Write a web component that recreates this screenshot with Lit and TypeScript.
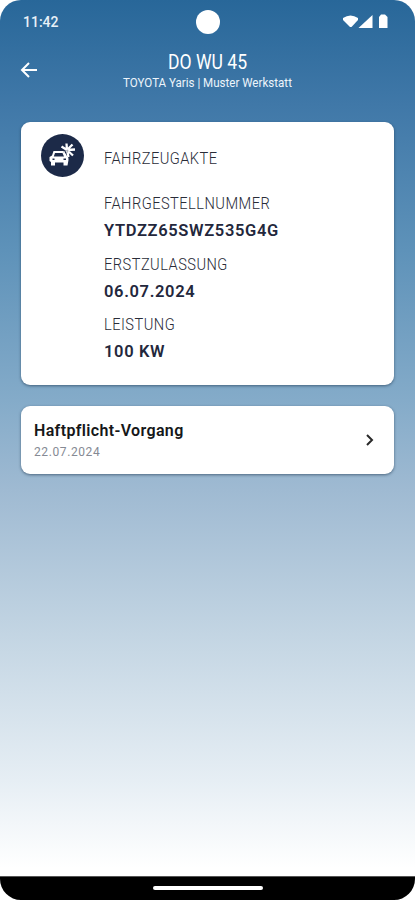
import { LitElement, html, css } from "lit";
import { customElement } from "lit/decorators.js";

const details = [
  { label: "FAHRGESTELLNUMMER", value: "YTDZZ65SWZ535G4G" },
  { label: "ERSTZULASSUNG", value: "06.07.2024" },
  { label: "LEISTUNG", value: "100 KW" },
];

@customElement("app-root")
export class AppRoot extends LitElement {
  static styles = css`
    :host { display: block; background: #fff; font-family: Roboto, sans-serif; }
    * { box-sizing: border-box; }
    .screen {
      width: 415px; height: 900px; border-radius: 21px; overflow: hidden;
      display: flex; flex-direction: column;
      background: linear-gradient(#286799 0, #4078a8 105px, #5e92b9 250px, #84abc9 400px, #9fbad2 490px, #c3d5e3 635px, #e6eef4 780px, #fff 868px);
    }
    .status {
      height: 43px; display: grid; grid-template-columns: 1fr 24px 1fr;
      align-items: center; padding: 0 23px 0 23px; color: #fff;
    }
    .time { font-size: 14px; font-weight: 500; line-height: 16px; color: #e8f1f8; }
    .camera { width: 24px; height: 24px; border-radius: 50%; background: #fff; }
    .signals { justify-self: end; display: block; margin-right: 3px; }
    .header { height: 79px; display: grid; grid-template-columns: 58px 1fr 58px; padding-top: 7px; }
    .back { margin: 11px 0 0 20px; }
    .titles { text-align: center; color: #fff; white-space: nowrap; }
    .title { font-size: 20px; line-height: 24px; transform: scaleX(.88); }
    .subtitle { font-size: 13px; line-height: 18px; color: #edf4fb; transform: scaleX(.89); }
    .card {
      background: #fff; border-radius: 9px; margin: 0 21px;
      box-shadow: 0 1px 3px rgba(25, 50, 75, .6);
    }
    .vehicle { height: 263px; padding: 12px 20px; display: grid; grid-template-columns: 63px 1fr; align-content: start; }
    .badge { width: 43px; height: 43px; display: block; }
    .label {
      font-size: 17px; line-height: 20px; font-weight: 300; color: #292c38;
      letter-spacing: .55px; transform-origin: 0 50%; transform: scaleX(.86); white-space: nowrap;
    }
    .heading { margin-top: 14px; }
    .details { grid-column: 2; margin-top: 16px; }
    .row { height: 60.5px; }
    .value { font-size: 16.5px; line-height: 20px; font-weight: 600; letter-spacing: .65px; color: #23273c; margin-top: 8px; white-space: nowrap; }
    .case {
      margin-top: 21px; height: 68px; padding: 15px 13px;
      display: flex; justify-content: space-between;
    }
    .name { font-size: 16px; line-height: 20px; font-weight: 600; letter-spacing: .35px; color: #161719; }
    .date { font-size: 12px; line-height: 16px; letter-spacing: .6px; color: #858a94; margin-top: 3px; }
    .chevron { margin: 11px 4px 0 0; }
    .nav {
      margin-top: auto; height: 24px; background: #000; border-top: 1px solid #555;
      display: flex; justify-content: center; padding-top: 9px;
    }
    .handle { width: 110px; height: 4px; border-radius: 2px; background: #fff; }
  `;

  render() {
    return html`
      <div class="screen">
        <div class="status">
          <span class="time">11:42</span>
          <span class="camera"></span>
          <svg class="signals" width="46" height="16" viewBox="0 0 46 16" fill="#fff">
            <path d="M0 4Q7.500 -1 15 4V6L8.500 13H7L0 6Z" />
            <path d="M29.500 1V14H15.500Z" />
            <path d="M38 0.500H42L44.500 3V14H36V3Z" />
          </svg>
        </div>
        <header class="header">
          <svg class="back" width="18" height="18" viewBox="0 0 18 18" fill="none" stroke="#fff" stroke-width="2">
            <path d="M17 9H2M9 2L2 9L9 16" />
          </svg>
          <div class="titles">
            <div class="title">DO WU 45</div>
            <div class="subtitle">TOYOTA Yaris | Muster Werkstatt</div>
          </div>
        </header>
        <section class="card vehicle">
          <svg class="badge" viewBox="0 0 43 43">
            <circle cx="21.5" cy="21.5" r="21.5" fill="#1c2a48" />
            <path fill="#fff" fill-rule="evenodd" d="M12.500 17H23L26 22Q28 23 27.500 26L26.500 31.500H22.500V28.500H14V31.500H10V28L8.500 27V23L11 21.500ZM14 19L12.800 22.500H23L21.500 19ZM11.500 24.500V26H13.500V24.500ZM22.500 24.500V26H25V24.500Z" />
            <path d="M26 16L20.500 12.500M26 16L25.500 9.500M26 16L31.500 10.500M26 16L34 15.500M26 16L32 21.500M26 16L27.500 23" fill="none" stroke="#fff" stroke-width="2.300" />
            <path d="M22 18L27 16L26 19" fill="none" stroke="#a0a5ad" stroke-width=".8" />
          </svg>
          <div class="label heading">FAHRZEUGAKTE</div>
          <div class="details">
            ${details.map(
              (d) => html`<div class="row">
                <div class="label">${d.label}</div>
                <div class="value">${d.value}</div>
              </div>`
            )}
          </div>
        </section>
        <section class="card case">
          <div>
            <div class="name">Haftpflicht-Vorgang</div>
            <div class="date">22.07.2024</div>
          </div>
          <svg class="chevron" width="14" height="16" viewBox="0 0 14 16" fill="none" stroke="#292929" stroke-width="2">
            <path d="M4 3L9 8L4 13" />
          </svg>
        </section>
        <div class="nav"><div class="handle"></div></div>
      </div>
    `;
  }
}
